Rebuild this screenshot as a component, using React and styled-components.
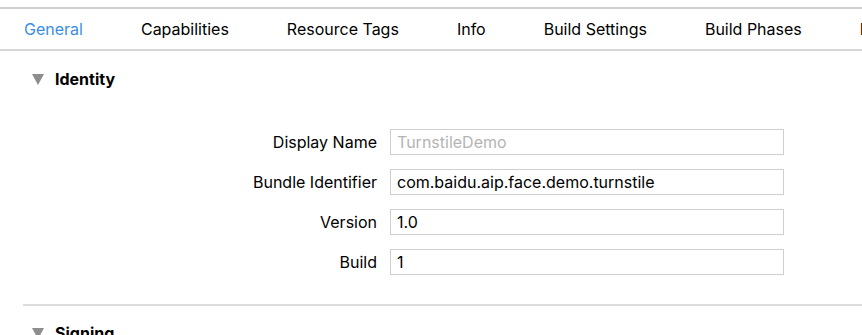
import React from 'react';
import styled, { createGlobalStyle } from 'styled-components';

const GlobalStyle = createGlobalStyle`
  html, body {
    margin: 0;
    padding: 0;
    background: #ffffff;
    font-family: Inter, "Liberation Sans", Arial, sans-serif;
    color: #000;
    overflow: hidden;
  }
`;

const Page = styled.div`
  width: 862px;
  height: 335px;
  overflow: hidden;
  padding-top: 7px;
  box-sizing: border-box;
`;

const TabBar = styled.nav`
  display: flex;
  gap: 58px;
  align-items: center;
  padding-left: 24px;
  border-top: 2px solid #cfcfcf;
  border-bottom: 2px solid #d6d6d6;
  white-space: nowrap;
  overflow: hidden;
  box-sizing: border-box;
  height: 44px;
`;

const Tab = styled.span`
  font-size: 16px;
  color: ${(p) => (p.active ? '#3a8ee6' : '#000')};
  padding-bottom: 1px;
`;

const Section = styled.section`
  padding: 0 0 0 23px;
`;

const SectionHeader = styled.div`
  display: flex;
  align-items: center;
  gap: 11px;
  height: 30px;
  padding-left: 9px;
  margin-top: ${(p) => p.top}px;
  font-size: 16px;
  font-weight: bold;
`;

const Triangle = styled.span`
  width: 0;
  height: 0;
  border-left: 6px solid transparent;
  border-right: 6px solid transparent;
  border-top: 11px solid #8e8e8e;
`;

const Form = styled.div`
  display: grid;
  grid-template-columns: 354px 394px;
  column-gap: 13px;
  row-gap: 14px;
  margin-top: 35px;
  align-items: center;
`;

const Label = styled.label`
  text-align: right;
  font-size: 16px;
`;

const Field = styled.div`
  height: 26px;
  box-sizing: border-box;
  border: 1px solid #cfcfcf;
  display: flex;
  align-items: center;
  padding-left: 6px;
  font-size: 16px;
  color: ${(p) => (p.placeholder ? '#b4b4b4' : '#000')};
`;

const Divider = styled.hr`
  border: none;
  border-top: 2px solid #dcdcdc;
  margin: 29px 0 0 0;
`;

const tabs = ['General', 'Capabilities', 'Resource Tags', 'Info', 'Build Settings', 'Build Phases', 'Build Rules'];

const rows = [
  { label: 'Display Name', value: 'TurnstileDemo', placeholder: true },
  { label: 'Bundle Identifier', value: 'com.baidu.aip.face.demo.turnstile' },
  { label: 'Version', value: '1.0' },
  { label: 'Build', value: '1' },
];

export default function App() {
  return (
    <>
      <GlobalStyle />
      <Page>
        <TabBar>
          {tabs.map((t, i) => (
            <Tab key={t} active={i === 0}>{t}</Tab>
          ))}
        </TabBar>
        <Section>
          <SectionHeader top={13}>
            <Triangle />
            Identity
          </SectionHeader>
          <Form>
            {rows.map((r) => (
              <React.Fragment key={r.label}>
                <Label>{r.label}</Label>
                <Field placeholder={r.placeholder}>{r.value}</Field>
              </React.Fragment>
            ))}
          </Form>
          <Divider />
          <SectionHeader top={12}>
            <Triangle />
            Signing
          </SectionHeader>
        </Section>
      </Page>
    </>
  );
}
